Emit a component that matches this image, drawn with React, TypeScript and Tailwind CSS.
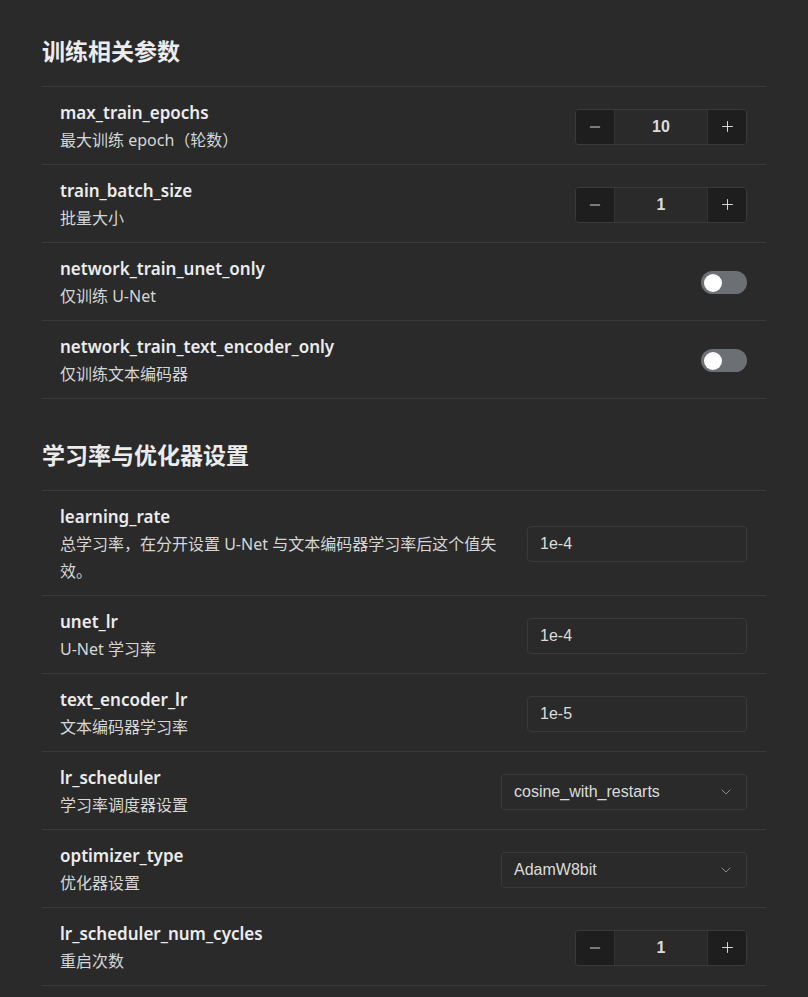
import { Minus, Plus, ChevronDown } from "lucide-react";

type Field =
  | { key: string; desc: string; kind: "number"; value: number }
  | { key: string; desc: string; kind: "switch"; value: boolean }
  | { key: string; desc: string; kind: "text"; value: string }
  | { key: string; desc: string; kind: "select"; value: string };

const sections: { title: string; fields: Field[] }[] = [
  {
    title: "训练相关参数",
    fields: [
      { key: "max_train_epochs", desc: "最大训练 epoch（轮数）", kind: "number", value: 10 },
      { key: "train_batch_size", desc: "批量大小", kind: "number", value: 1 },
      { key: "network_train_unet_only", desc: "仅训练 U-Net", kind: "switch", value: false },
      { key: "network_train_text_encoder_only", desc: "仅训练文本编码器", kind: "switch", value: false },
    ],
  },
  {
    title: "学习率与优化器设置",
    fields: [
      {
        key: "learning_rate",
        desc: "总学习率，在分开设置 U-Net 与文本编码器学习率后这个值失效。",
        kind: "text",
        value: "1e-4",
      },
      { key: "unet_lr", desc: "U-Net 学习率", kind: "text", value: "1e-4" },
      { key: "text_encoder_lr", desc: "文本编码器学习率", kind: "text", value: "1e-5" },
      { key: "lr_scheduler", desc: "学习率调度器设置", kind: "select", value: "cosine_with_restarts" },
      { key: "optimizer_type", desc: "优化器设置", kind: "select", value: "AdamW8bit" },
      { key: "lr_scheduler_num_cycles", desc: "重启次数", kind: "number", value: 1 },
    ],
  },
];

function NumberInput({ value }: { value: number }) {
  return (
    <div className="flex h-9 w-[172px] overflow-hidden rounded border border-[#3a3a3a]">
      <button className="flex w-[38px] items-center justify-center bg-[#1e1e1e] text-[#d8d8d8]">
        <Minus size={16} strokeWidth={1.6} />
      </button>
      <div className="flex flex-1 items-center justify-center border-x border-[#333] bg-[#2a2a2a] text-[16px] font-semibold text-[#dcdcdc] font-['Liberation_Sans',sans-serif]">
        {value}
      </div>
      <button className="flex w-[38px] items-center justify-center bg-[#1e1e1e] text-[#d8d8d8]">
        <Plus size={17} strokeWidth={1.4} />
      </button>
    </div>
  );
}

function Switch({ on }: { on: boolean }) {
  return (
    <div className={`flex h-[23px] w-[46px] items-center rounded-full px-[3px] ${on ? "bg-blue-500" : "bg-[#6c6f74]"}`}>
      <div className="h-[18px] w-[18px] rounded-full bg-white" />
    </div>
  );
}

function TextInput({ value }: { value: string }) {
  return (
    <div className="flex h-9 w-[220px] items-center rounded border border-[#3a3a3a] bg-[#2a2a2a] px-3 text-base text-[#dcdcdc] font-['Liberation_Sans',sans-serif]">
      {value}
    </div>
  );
}

function Select({ value }: { value: string }) {
  return (
    <div className="flex h-9 w-[246px] items-center justify-between rounded border border-[#3a3a3a] bg-[#2a2a2a] pl-3 pr-3 text-base text-[#dcdcdc] font-['Liberation_Sans',sans-serif]">
      <span>{value}</span>
      <ChevronDown size={16} strokeWidth={1.5} className="text-[#8a8a8a]" />
    </div>
  );
}

function Control({ field }: { field: Field }) {
  switch (field.kind) {
    case "number":
      return <NumberInput value={field.value} />;
    case "switch":
      return <Switch on={field.value} />;
    case "text":
      return <TextInput value={field.value} />;
    case "select":
      return <Select value={field.value} />;
  }
}

export default function App() {
  return (
    <div className="min-h-screen bg-[#2a2a2a] px-[42px] pt-[34px] font-['Noto_Sans','Noto_Sans_CJK_SC',sans-serif]">
      {sections.map((section, i) => (
        <section key={section.title} className={i > 0 ? "mt-[39px]" : ""}>
          <h2 className="mb-[20px] text-[23px] font-bold leading-8 text-[#ececec] font-['Noto_Sans_CJK_SC',sans-serif]">
            {section.title}
          </h2>
          <div className="border-b border-[#3a3a3a]">
            {section.fields.map((field) => (
              <div
                key={field.key}
                className="flex items-center border-t border-[#3a3a3a] pl-[18px] pr-[19px] pt-[12px] pb-[10px]"
              >
                <div className="min-w-0 flex-1 pr-[26px]">
                  <div className="text-[17px] font-semibold leading-[28px] text-[#ececec]">{field.key}</div>
                  <div className="text-base leading-[27px] text-[#d6d6d6]">{field.desc}</div>
                </div>
                <div className="shrink-0">
                  <Control field={field} />
                </div>
              </div>
            ))}
          </div>
        </section>
      ))}
    </div>
  );
}
